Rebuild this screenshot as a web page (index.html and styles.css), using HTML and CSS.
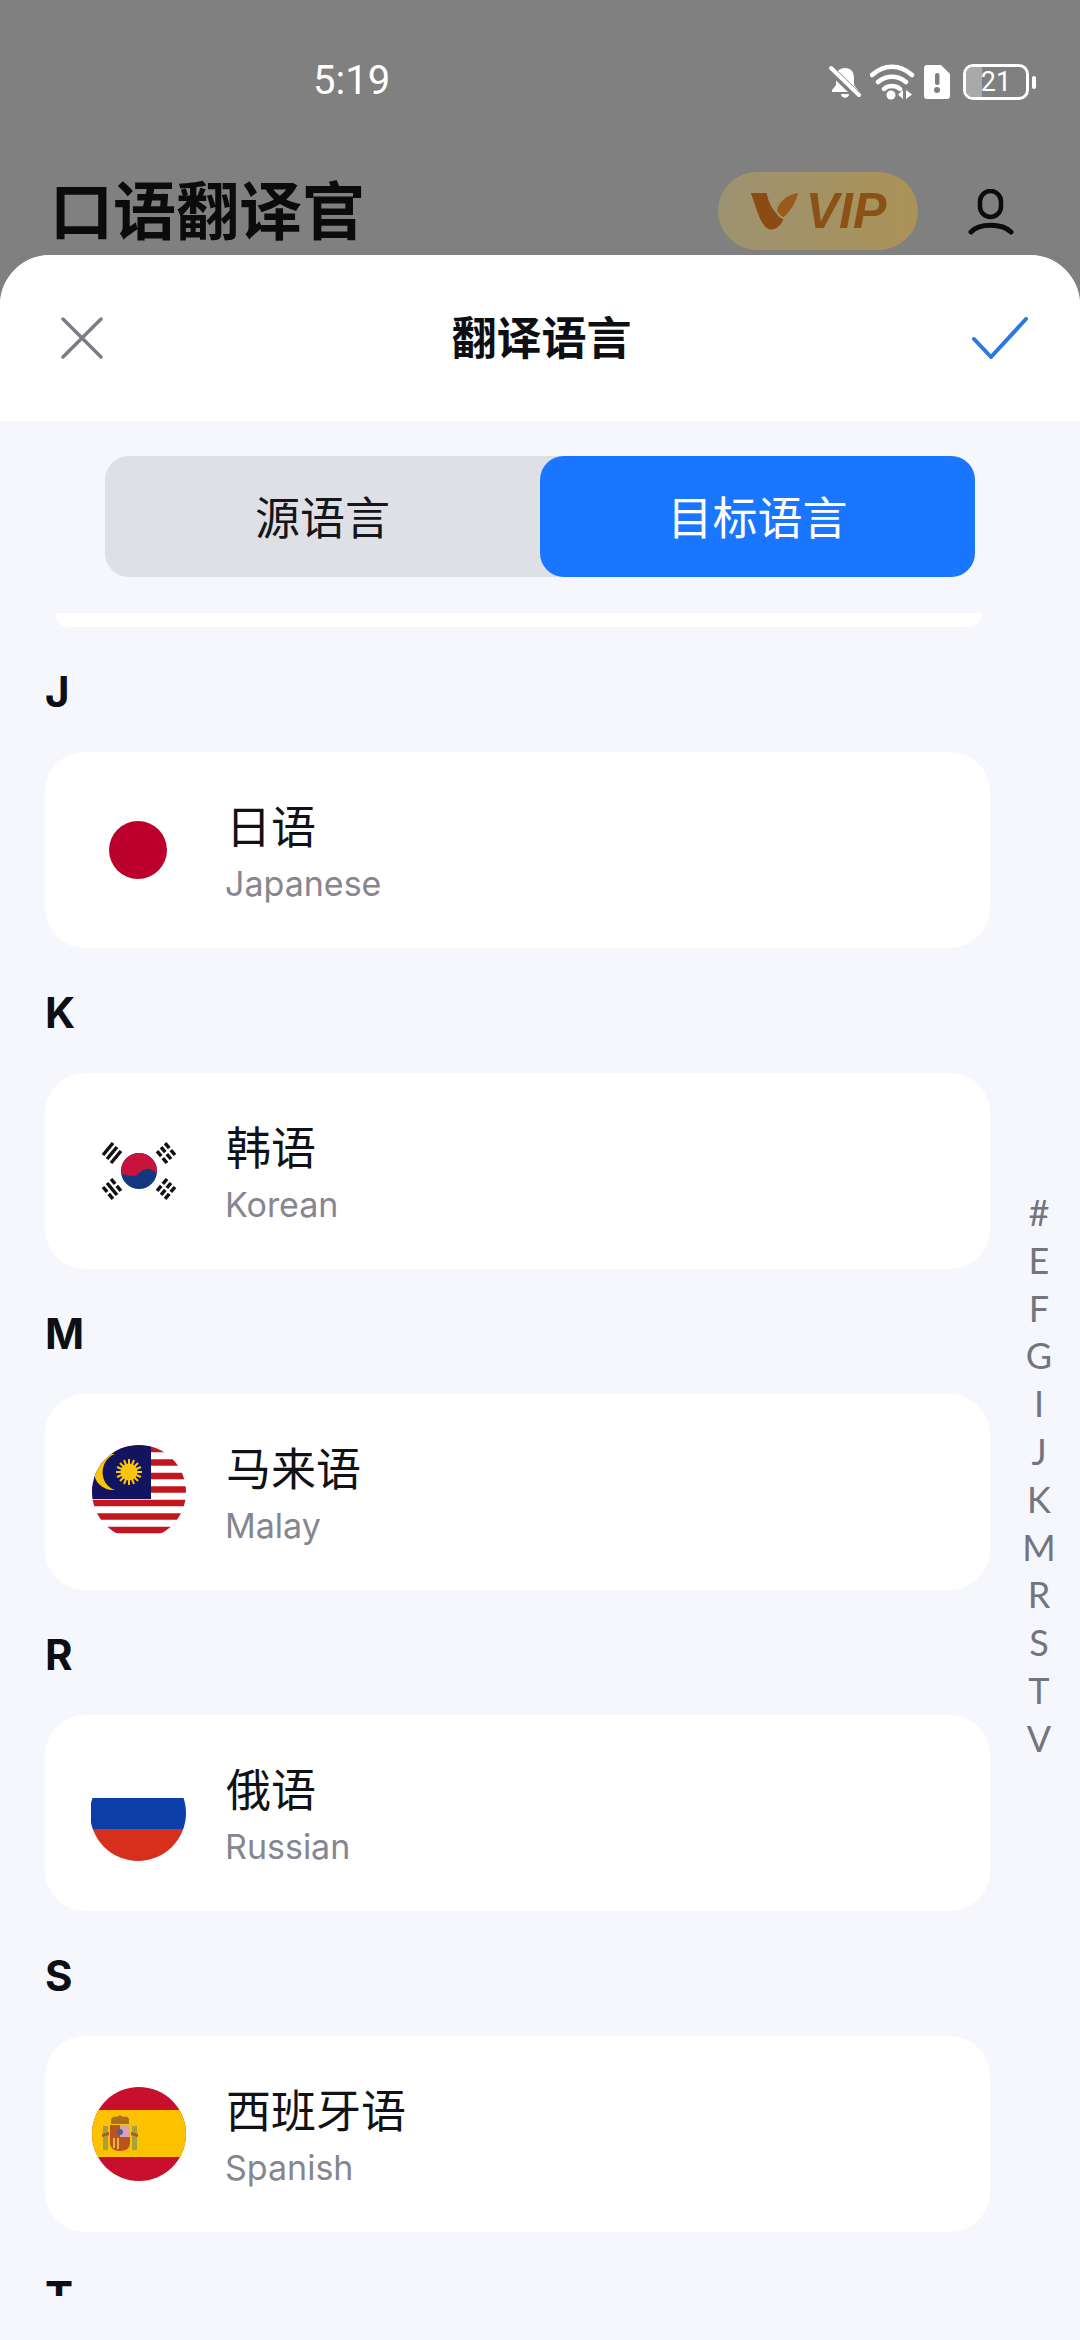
FILE: index.html
```html
<!DOCTYPE html>
<html lang="zh-CN">
<head>
    <meta charset="UTF-8">
    <meta name="viewport" content="width=device-width, initial-scale=1.0">
    <title>翻译语言</title>
    <link rel="stylesheet" href="styles.css">
</head>
<body>
    <div class="screen">
        <div class="status-bar">
            <span class="status-time">5:19</span>
            <div class="status-icons">
                <svg class="icon-bell" width="36" height="34" viewBox="0 0 36 34">
                    <path d="M18 3c-6 0-9 4-9 10v7l-4 5v2h26v-2l-4-5v-7c0-6-3-10-9-10z" fill="#fff"/>
                    <path d="M14 29h8c0 5-8 5-8 0z" fill="#fff"/>
                    <path d="M4 5l26 25" stroke="#808080" stroke-width="8"/>
                    <path d="M4 3l28 27" stroke="#fff" stroke-width="4" stroke-linecap="round"/>
                </svg>
                <svg class="icon-wifi" width="46" height="36" viewBox="0 0 46 36">
                    <path d="M2 11c12-11 28-11 40 0M8 18c8-7 20-7 28 0M14 25c4-4 12-4 16 0" fill="none" stroke="#fff" stroke-width="4.5" stroke-linecap="round"/>
                    <circle cx="21" cy="31" r="4.5" fill="#fff"/>
                    <path d="M33 26v9l-5-4.500zM36 26v9l6-4.500z" fill="#fff"/>
                </svg>
                <svg class="icon-sim" width="28" height="36" viewBox="0 0 28 36">
                    <path d="M4 1h14l9 9v22a3 3 0 0 1-3 3H4a3 3 0 0 1-3-3V4a3 3 0 0 1 3-3z" fill="#fff"/>
                    <rect x="12" y="9" width="4.500" height="12" rx="2" fill="#808080"/>
                    <circle cx="14" cy="26" r="3" fill="#808080"/>
                </svg>
                <div class="battery">
                    <div class="battery-body">
                        <span class="battery-fill"></span>
                        <span class="battery-num">21</span>
                    </div>
                    <span class="battery-tip"></span>
                </div>
            </div>
        </div>

        <div class="app-bar">
            <h1 class="app-title">口语翻译官</h1>
            <div class="vip-pill">
                <svg width="50" height="40" viewBox="0 0 46 38">
                    <path d="M0 2h15c2 9 5 15 9 19 2 3 4 5 7 6-3 7-9 11-14 9C9 33 5 15 0 2z" fill="#8a4c12"/>
                    <path d="M25 18c2-7 8-14 20-16-2 9-8 18-14 23-3-2-5-4-6-7z" fill="#9a5a1c"/>
                </svg>
                <span class="vip-text">VIP</span>
            </div>
            <svg class="user-icon" width="46" height="46" viewBox="0 0 46 46">
                <rect x="12" y="2" width="21" height="26" rx="10.500" fill="none" stroke="#0b0b0b" stroke-width="4.500"/>
                <path d="M3 43c8-9 31-9 40 0" fill="none" stroke="#0b0b0b" stroke-width="5" stroke-linecap="round"/>
            </svg>
        </div>

        <div class="sheet">
            <div class="sheet-head">
                <svg width="42" height="42" viewBox="0 0 42 42">
                    <path d="M2 2l38 38M40 2L2 40" stroke="#7b7c85" stroke-width="3.500" stroke-linecap="round"/>
                </svg>
                <h2 class="sheet-title">翻译语言</h2>
                <svg width="56" height="42" viewBox="0 0 56 42">
                    <path d="M2 22l17 18L54 2" fill="none" stroke="#2b78e0" stroke-width="4" stroke-linecap="round" stroke-linejoin="round"/>
                </svg>
            </div>

            <div class="tabs">
                <div class="tab">源语言</div>
                <div class="tab tab-active">目标语言</div>
            </div>

            <div class="list">
                <div class="lang-card lang-card-cut"></div>

                <div class="group-letter">J</div>
                <div class="lang-card">
                    <svg class="flag" viewBox="0 0 96 96">
                        <circle cx="47" cy="48" r="29" fill="#bb002c"/>
                    </svg>
                    <div class="lang-text">
                        <div class="lang-name">日语</div>
                        <div class="lang-en">Japanese</div>
                    </div>
                </div>

                <div class="group-letter">K</div>
                <div class="lang-card">
                    <svg class="flag" viewBox="0 0 96 96">
                        <circle cx="48" cy="48" r="18" fill="#14387f"/>
                        <path d="M30.250 51C36 52 42 54 46 52 50 49 52 45.500 56 46 60 46 64 48 65.750 51A18 18 0 1 0 30.250 51z" fill="#c8143c"/>
                        <g stroke="#111" stroke-width="3.500">
                            <path d="M12 32l10-12M16 36l10-12M20 40l10-12"/>
                            <path d="M84 32L74 20M80 36L70 24M76 40L66 28" stroke-dasharray="6.500 2.500"/>
                            <path d="M16 60l10 12"/>
                            <path d="M12 64l10 12M20 56l10 12" stroke-dasharray="6.500 2.500"/>
                            <path d="M84 64L74 76M80 60L70 72M76 56L66 68" stroke-dasharray="6.500 2.500"/>
                        </g>
                    </svg>
                    <div class="lang-text">
                        <div class="lang-name">韩语</div>
                        <div class="lang-en">Korean</div>
                    </div>
                </div>

                <div class="group-letter">M</div>
                <div class="lang-card">
                    <svg class="flag" viewBox="0 0 96 96">
                        <clipPath id="myDisc"><circle cx="48" cy="48" r="47"/></clipPath>
                        <g clip-path="url(#myDisc)">
                            <rect width="96" height="96" fill="#fff"/>
                            <path d="M0 5h96M0 18.500h96M0 32h96M0 45.500h96M0 59h96M0 72.500h96M0 86h96" stroke="#c4161f" stroke-width="6.500"/>
                            <rect width="60" height="55" fill="#12145f"/>
                            <path d="M24 10C8 16 7 40 24 46 12 47 3 38 3 28 3 18 12 10 24 10z" fill="#f8c40d"/>
                            <circle cx="38" cy="28" r="8.500" fill="#f8c40d"/>
                            <path d="M38 15v26M25 28h26M29 19l18 18M47 19L29 37M33 16l10 24M43 16L33 40M26 23l24 10M50 23L26 33" stroke="#f8c40d" stroke-width="2"/>
                        </g>
                    </svg>
                    <div class="lang-text">
                        <div class="lang-name">马来语</div>
                        <div class="lang-en">Malay</div>
                    </div>
                </div>

                <div class="group-letter">R</div>
                <div class="lang-card">
                    <svg class="flag" viewBox="0 0 96 96">
                        <clipPath id="ruDisc"><circle cx="47" cy="48" r="48"/></clipPath>
                        <g clip-path="url(#ruDisc)">
                            <rect y="33" width="96" height="32" fill="#0b3ea8"/>
                            <rect y="64" width="96" height="32" fill="#d62f1c"/>
                        </g>
                    </svg>
                    <div class="lang-text">
                        <div class="lang-name">俄语</div>
                        <div class="lang-en">Russian</div>
                    </div>
                </div>

                <div class="group-letter">S</div>
                <div class="lang-card">
                    <svg class="flag" viewBox="0 0 96 96">
                        <clipPath id="esDisc"><circle cx="48" cy="48" r="47"/></clipPath>
                        <g clip-path="url(#esDisc)">
                            <rect width="96" height="96" fill="#c8102e"/>
                            <rect y="24" width="96" height="47" fill="#fcc200"/>
                        </g>
                        <path d="M12 40h5v24h-5zM41 40h5v24h-5z" fill="#a3a23c"/>
                        <path d="M11 48l7-2v3l-7 2zM47 48l-7-2v3l7 2z" fill="#b9531f"/>
                        <path d="M19 39h20v18c0 5-4 8-10 8s-10-3-10-8z" fill="#b9531f"/>
                        <path d="M29 39h10v12H29z" fill="#d9a3b4"/>
                        <path d="M22 52h2v10h-2zM26 52h2v11h-2z" fill="#e9b23a"/>
                        <path d="M20 33c2-3 5-3 6-2 1-2 5-2 6 0 2-1 5-1 6 2v5H20z" fill="#a9711f"/>
                        <circle cx="29" cy="46" r="3" fill="#4d5f9a"/>
                    </svg>
                    <div class="lang-text">
                        <div class="lang-name">西班牙语</div>
                        <div class="lang-en">Spanish</div>
                    </div>
                </div>

                <div class="group-letter">T</div>
            </div>

            <div class="az-index">
                <span>#</span>
                <span>E</span>
                <span>F</span>
                <span>G</span>
                <span>I</span>
                <span>J</span>
                <span>K</span>
                <span>M</span>
                <span>R</span>
                <span>S</span>
                <span>T</span>
                <span>V</span>
            </div>
        </div>
    </div>
</body>
</html>
```

FILE: styles.css
```css
* {
    box-sizing: border-box;
}

html,
body {
    margin: 0;
    padding: 0;
}

body {
    font-family: "Noto Sans", "Noto Sans CJK SC", sans-serif;
    color: #0d0f14;
}

.screen {
    width: 1080px;
    height: 2340px;
    display: flex;
    flex-direction: column;
    background-color: #808080;
    overflow: hidden;
}

/* status bar */
.status-bar {
    height: 160px;
    padding: 58px 44px 0 313px;
    display: flex;
    justify-content: space-between;
    align-items: flex-start;
    color: #fff;
}

.status-time {
    font-family: Roboto, sans-serif;
    font-size: 40px;
    line-height: 46px;
}

.status-icons {
    display: flex;
    align-items: center;
    gap: 7px;
    height: 46px;
    margin-top: 1px;
}

.battery {
    display: flex;
    align-items: center;
    gap: 3px;
    margin-left: 5px;
}

.battery-body {
    position: relative;
    width: 66px;
    height: 36px;
    border: 3px solid #fff;
    border-radius: 10px;
    text-align: center;
    overflow: hidden;
}

.battery-fill {
    position: absolute;
    top: 0;
    left: 0;
    width: 16px;
    height: 100%;
    background-color: #a9a9a9;
}

.battery-num {
    position: relative;
    font-family: Roboto, sans-serif;
    font-size: 27px;
    line-height: 30px;
    display: block;
}

.battery-tip {
    width: 4px;
    height: 13px;
    border-radius: 2px;
    background-color: #fff;
}

/* app bar behind the sheet */
.app-bar {
    height: 95px;
    padding: 12px 66px 0 50px;
    display: flex;
    align-items: flex-start;
}

.app-title {
    margin: 4px auto 0 0;
    font-size: 63px;
    line-height: 68px;
    font-weight: 700;
    color: #0b0b0b;
}

.vip-pill {
    width: 200px;
    height: 78px;
    border-radius: 39px;
    background: linear-gradient(90deg, #9d9272, #ab9256);
    display: flex;
    align-items: center;
    justify-content: center;
    gap: 6px;
}

.vip-text {
    font-family: "Liberation Sans", sans-serif;
    font-size: 50px;
    font-weight: 700;
    font-style: italic;
    color: #8a5216;
}

.user-icon {
    margin: 17px 0 0 50px;
}

/* bottom sheet */
.sheet {
    position: relative;
    flex: 1;
    min-height: 0;
    border-radius: 50px 50px 0 0;
    background-color: #f5f7fc;
    overflow: hidden;
}

.sheet-head {
    height: 166px;
    padding: 0 52px 0 61px;
    display: flex;
    align-items: center;
    justify-content: space-between;
    background-color: #fff;
}

.sheet-title {
    margin: 0 0 0 8px;
    font-size: 45px;
    line-height: 60px;
    font-weight: 700;
}

.tabs {
    width: 870px;
    height: 121px;
    margin: 35px 0 0 105px;
    display: flex;
    border-radius: 24px;
    background-color: #dfe0e5;
}

.tab {
    flex: 1;
    display: flex;
    align-items: center;
    justify-content: center;
    padding-bottom: 3px;
    font-size: 45px;
    color: #14161b;
}

.tab-active {
    border-radius: 24px;
    background-color: #1a76ff;
    color: #fff;
}

.list {
    height: 1683px;
    margin-top: 36px;
    padding: 0 90px 0 45px;
    overflow: hidden;
}

.group-letter {
    height: 125px;
    padding-top: 41px;
    font-family: Inter, sans-serif;
    font-size: 42px;
    line-height: 48px;
    font-weight: 700;
}

.lang-card {
    height: 196px;
    padding: 0 0 0 46px;
    display: flex;
    align-items: center;
    border-radius: 40px;
    background-color: #fff;
}

.lang-card-cut {
    height: 14px;
    margin-right: 8px;
    margin-left: 10px;
    border-radius: 0 0 24px 24px;
}

.flag {
    width: 96px;
    height: 96px;
    flex-shrink: 0;
}

.lang-text {
    margin-top: 4px;
    margin-left: 39px;
}

.lang-name {
    font-size: 45px;
    line-height: 60px;
    color: #101216;
}

.lang-en {
    margin-top: 3px;
    margin-left: -1px;
    font-family: Inter, sans-serif;
    font-size: 34px;
    line-height: 48px;
    color: #85868f;
}

.az-index {
    position: absolute;
    top: 934px;
    right: 17px;
    width: 48px;
    display: flex;
    flex-direction: column;
    align-items: center;
    font-family: Lato, sans-serif;
    font-size: 36px;
    line-height: 47.800px;
    color: #73747d;
}
```
